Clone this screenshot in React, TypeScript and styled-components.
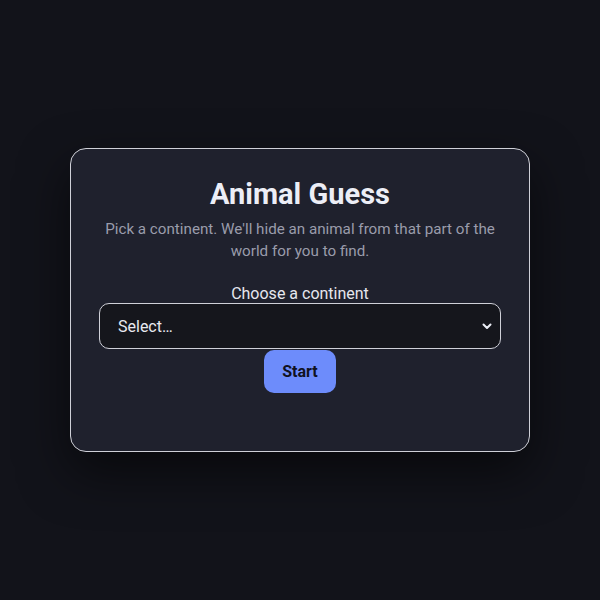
import { useState } from 'react';
import styled, { createGlobalStyle } from 'styled-components';

const CONTINENTS: string[] = [
  'Africa',
  'Asia',
  'Europe',
  'North America',
  'South America',
  'Oceania',
  'Antarctica',
];

const GlobalStyle = createGlobalStyle`
  html, body {
    margin: 0;
    padding: 0;
    background: #12131a;
  }
  body {
    font-family: Roboto, "Liberation Sans", sans-serif;
    color: #e8e9f0;
  }
`;

const Page = styled.div`
  min-height: 600px;
  display: flex;
  align-items: center;
  justify-content: center;
`;

const Card = styled.div`
  width: 460px;
  box-sizing: border-box;
  padding: 28px 28px 58px;
  background: #1f212d;
  border: 1px solid #cfd0d8;
  border-radius: 16px;
  box-shadow: 0 20px 50px rgba(0, 0, 0, 0.55);
  display: flex;
  flex-direction: column;
  align-items: center;
  text-align: center;
`;

const Title = styled.h1`
  margin: 0;
  font-size: 29px;
  line-height: 34px;
  font-weight: 700;
  color: #eceef6;
`;

const Subtitle = styled.p`
  margin: 7px 0 22px;
  font-size: 15.2px;
  line-height: 22px;
  color: #9a9cab;
`;

const Label = styled.label`
  font-size: 16px;
  line-height: 19px;
  color: #e6e7ee;
`;

const SelectWrap = styled.div`
  position: relative;
  width: 100%;
`;

const Select = styled.select`
  appearance: none;
  width: 100%;
  height: 46px;
  box-sizing: border-box;
  padding: 0 36px 0 18px;
  font-family: inherit;
  font-size: 16px;
  color: #e8e9f0;
  background: #15161c;
  border: 1px solid #cfd0d8;
  border-radius: 10px;
  outline: none;
`;

const Chevron = styled.svg`
  position: absolute;
  right: 8px;
  top: 50%;
  transform: translateY(-50%);
  pointer-events: none;
`;

const StartButton = styled.button`
  margin-top: 1px;
  width: 72px;
  height: 43px;
  border: none;
  border-radius: 10px;
  background: #6d8cfb;
  color: #10121f;
  font-family: inherit;
  font-size: 16px;
  font-weight: 700;
  cursor: pointer;
`;

export default function App() {
  const [continent, setContinent] = useState<string>('');

  return (
    <Page>
      <GlobalStyle />
      <Card>
        <Title>Animal Guess</Title>
        <Subtitle>
          Pick a continent. We'll hide an animal from that part of the
          <br />
          world for you to find.
        </Subtitle>
        <Label htmlFor="continent">Choose a continent</Label>
        <SelectWrap>
          <Select
            id="continent"
            value={continent}
            onChange={(e) => setContinent(e.target.value)}
          >
            <option value="">Select…</option>
            {CONTINENTS.map((c) => (
              <option key={c} value={c}>
                {c}
              </option>
            ))}
          </Select>
          <Chevron width="12" height="12" viewBox="0 0 12 12">
            <path
              d="M2.5 4.5 L6 8 L9.5 4.5"
              fill="none"
              stroke="#eceef6"
              strokeWidth="2"
              strokeLinecap="round"
              strokeLinejoin="round"
            />
          </Chevron>
        </SelectWrap>
        <StartButton>Start</StartButton>
      </Card>
    </Page>
  );
}
